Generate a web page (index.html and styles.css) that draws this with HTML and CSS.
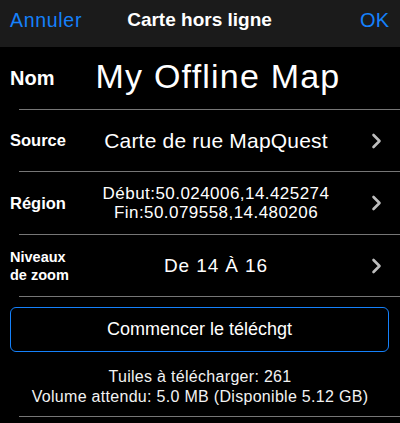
FILE: index.html
```html
<!DOCTYPE html>
<html lang="fr">
<head>
<meta charset="utf-8">
<title>Carte hors ligne</title>
<link rel="stylesheet" href="styles.css">
</head>
<body>
<div class="screen">
  <header class="nav">
    <span class="nav-btn cancel">Annuler</span>
    <span class="nav-title">Carte hors ligne</span>
    <span class="nav-btn ok">OK</span>
  </header>

  <div class="row tall">
    <div class="label big">Nom</div>
    <div class="value name">My Offline Map</div>
    <div class="chev"></div>
  </div>
  <div class="sep"></div>

  <div class="row">
    <div class="label">Source</div>
    <div class="value source">Carte de rue MapQuest</div>
    <div class="chev"><svg width="11" height="16" viewBox="0 0 11 16"><path d="M2.5 2 L8.5 8 L2.5 14" fill="none" stroke="#bdbdbd" stroke-width="2.6" stroke-linecap="round" stroke-linejoin="round"/></svg></div>
  </div>
  <div class="sep"></div>

  <div class="row tall">
    <div class="label">Région</div>
    <div class="value coords">Début:50.024006,14.425274<br>Fin:50.079558,14.480206</div>
    <div class="chev"><svg width="11" height="16" viewBox="0 0 11 16"><path d="M2.5 2 L8.5 8 L2.5 14" fill="none" stroke="#bdbdbd" stroke-width="2.6" stroke-linecap="round" stroke-linejoin="round"/></svg></div>
  </div>
  <div class="sep"></div>

  <div class="row">
    <div class="label small">Niveaux<br>de zoom</div>
    <div class="value zoom">De 14 À 16</div>
    <div class="chev"><svg width="11" height="16" viewBox="0 0 11 16"><path d="M2.5 2 L8.5 8 L2.5 14" fill="none" stroke="#bdbdbd" stroke-width="2.6" stroke-linecap="round" stroke-linejoin="round"/></svg></div>
  </div>
  <div class="sep"></div>

  <button class="btn" type="button">Commencer le téléchgt</button>

  <div class="info">
    <div>Tuiles à télécharger: 261</div>
    <div>Volume attendu: 5.0 MB (Disponible 5.12 GB)</div>
  </div>
  <div class="sep bottom"></div>
</div>
</body>
</html>
```

FILE: styles.css
```css
html, body {
  margin: 0;
  padding: 0;
  background: #000;
}

.screen {
  width: 400px;
  height: 423px;
  overflow: hidden;
  background: #000;
  color: #fff;
  font-family: "Liberation Sans", Arial, sans-serif;
}

.nav {
  box-sizing: border-box;
  height: 47px;
  padding: 8px 11px 0 10px;
  background: #1b1b1b;
  display: flex;
  justify-content: space-between;
  align-items: flex-start;
  line-height: 24px;
}

.nav-btn {
  color: #1581fb;
  font-size: 20px;
}

.cancel {
  font-size: 19.5px;
  letter-spacing: 0.7px;
  width: 80px;
}

.ok {
  width: 80px;
  text-align: right;
}

.nav-title {
  font-size: 19px;
  font-weight: bold;
}

.row {
  height: 61px;
  display: grid;
  grid-template-columns: 80px 1fr 48px;
  align-items: center;
}

.row.tall {
  height: 62px;
}

.label {
  padding-left: 10px;
  font-size: 16.5px;
  font-weight: bold;
}

.label.big {
  font-size: 20px;
}

.label.small {
  font-size: 14.5px;
  line-height: 18px;
}

.value {
  text-align: center;
  white-space: nowrap;
}

.name {
  font-size: 34px;
  letter-spacing: 1.2px;
  margin-bottom: 3px;
  padding-left: 4px;
}

.source {
  font-size: 21px;
  letter-spacing: 0.2px;
}

.coords {
  font-size: 17px;
  line-height: 19px;
  letter-spacing: 0.45px;
}

.zoom {
  font-size: 19px;
  letter-spacing: 0.9px;
}

.chev {
  display: flex;
  justify-content: center;
  align-items: center;
}

.chev svg {
  display: block;
}

.sep {
  height: 1px;
  margin-left: 19px;
  background: #767676;
}

.btn {
  display: block;
  box-sizing: border-box;
  width: 379px;
  height: 45px;
  margin: 10px 0 0 10px;
  padding: 0;
  background: transparent;
  border: 1.5px solid #1581fb;
  border-radius: 6px;
  color: #fff;
  font-family: "Liberation Sans", Arial, sans-serif;
  font-size: 18px;
  text-align: center;
}

.info {
  margin-top: 15px;
  text-align: center;
  font-size: 16px;
  line-height: 19.5px;
  letter-spacing: 0.3px;
  color: #f2f2f2;
}

.sep.bottom {
  margin-top: 10px;
}
```
